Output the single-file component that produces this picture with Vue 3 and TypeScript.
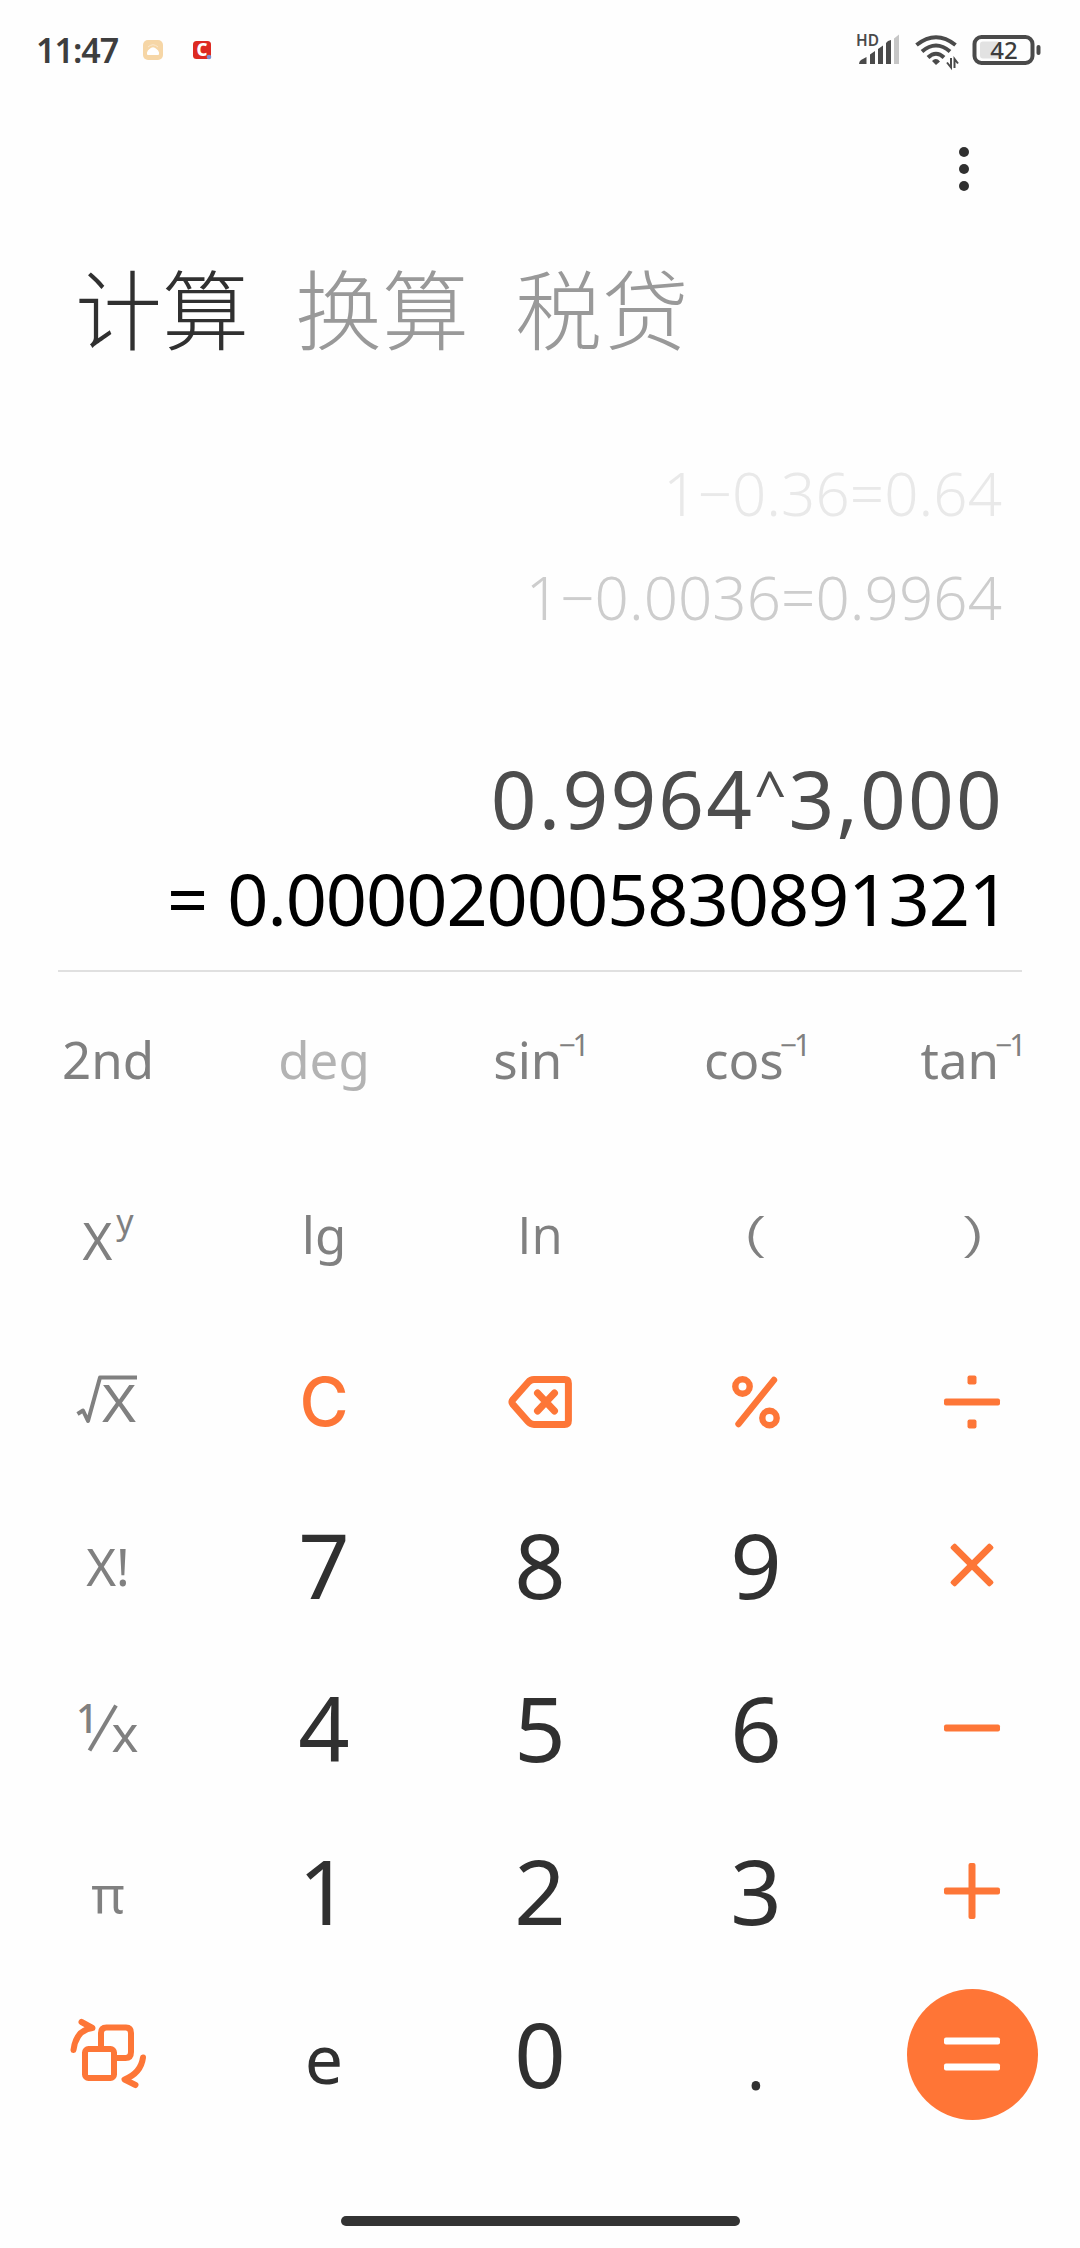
<script setup lang="ts">
  import { ref } from 'vue'

  type Key = {
    id: string
    kind: 'fn' | 'num' | 'icon' | 'equal'
    label?: string
    sup?: string
  }

  const tabs = ['计算', '换算', '税贷']
  const activeTab = ref(0)

  const history = ['1−0.36=0.64', '1−0.0036=0.9964']
  const expression = { base: '0.9964', exponent: '3,000' }
  const result = '0.000020005830891321'

  const keys: Key[] = [
    { id: 'second', kind: 'fn', label: '2nd' },
    { id: 'deg', kind: 'fn', label: 'deg' },
    { id: 'asin', kind: 'fn', label: 'sin', sup: '−1' },
    { id: 'acos', kind: 'fn', label: 'cos', sup: '−1' },
    { id: 'atan', kind: 'fn', label: 'tan', sup: '−1' },
    { id: 'power', kind: 'fn', label: 'X', sup: 'y' },
    { id: 'lg', kind: 'fn', label: 'lg' },
    { id: 'ln', kind: 'fn', label: 'In' },
    { id: 'open', kind: 'fn', label: '(' },
    { id: 'close', kind: 'fn', label: ')' },
    { id: 'sqrt', kind: 'icon' },
    { id: 'clear', kind: 'fn', label: 'C' },
    { id: 'back', kind: 'icon' },
    { id: 'percent', kind: 'icon' },
    { id: 'divide', kind: 'icon' },
    { id: 'factorial', kind: 'fn', label: 'X!' },
    { id: 'n7', kind: 'num', label: '7' },
    { id: 'n8', kind: 'num', label: '8' },
    { id: 'n9', kind: 'num', label: '9' },
    { id: 'times', kind: 'icon' },
    { id: 'inverse', kind: 'icon' },
    { id: 'n4', kind: 'num', label: '4' },
    { id: 'n5', kind: 'num', label: '5' },
    { id: 'n6', kind: 'num', label: '6' },
    { id: 'minus', kind: 'icon' },
    { id: 'pi', kind: 'fn', label: 'π' },
    { id: 'n1', kind: 'num', label: '1' },
    { id: 'n2', kind: 'num', label: '2' },
    { id: 'n3', kind: 'num', label: '3' },
    { id: 'plus', kind: 'icon' },
    { id: 'swap', kind: 'icon' },
    { id: 'euler', kind: 'num', label: 'e' },
    { id: 'n0', kind: 'num', label: '0' },
    { id: 'dot', kind: 'num', label: '.' },
    { id: 'equal', kind: 'equal' },
  ]
</script>

<template>
  <div class="screen">
    <header class="status">
      <span class="clock">11:47</span>
      <svg class="app-icon" width="20" height="20" viewBox="0 0 20 20">
        <rect width="20" height="20" rx="5" fill="#f6d6a6" />
        <path d="M5 15Q3.500 15 4 12.500Q4.500 10 6.500 9Q10 5.500 13.500 9Q15.500 10 16 12.500Q16.500 15 15 15Z" fill="#fff" />
        <path d="M5 7Q10 2.500 15 7" fill="none" stroke="#fbe9cf" />
      </svg>
      <svg class="app-icon red" width="19" height="19" viewBox="0 0 19 19">
        <rect width="18" height="18" rx="3.500" fill="#dd2a22" />
        <text x="9" y="15" text-anchor="middle" class="app-letter">C</text>
        <circle cx="16" cy="16" r="2.300" fill="#7d8fd0" />
      </svg>

      <svg class="signals" width="190" height="40" viewBox="0 0 190 40">
        <text x="6" y="15.500" class="hd" textLength="23" lengthAdjust="spacingAndGlyphs">HD</text>
        <g fill="#4a4a4a">
          <path d="M9 34Q9 31.500 11 30L16.500 27V34Z" />
          <path d="M20 34V24.500L25 21V34Z" />
          <path d="M28 34V19L33 15.500V34Z" />
          <path d="M36 34V13L38 11L41 10V34Z" />
        </g>
        <path d="M44 34V8.500L49 4.500V34Z" fill="#c6c6c6" />
        <g fill="none" stroke="#4a4a4a" stroke-width="4">
          <path d="M66.500 15Q86 -0.500 105.500 15" />
          <path d="M72 21.500Q86 9.500 100 21.500" />
          <path d="M78 27.500Q86 20 94 27.500" />
        </g>
        <path d="M82 31Q86 27 90 31.500L86 35Z" fill="#4a4a4a" />
        <path d="M101 28V37.500L97 32.500M104.500 38V29L108 33.500" fill="none" stroke="#4a4a4a" stroke-width="2" />
        <rect x="124.500" y="7" width="58" height="26" rx="7" fill="none" stroke="#4a4a4a" stroke-width="4" />
        <rect x="130" y="11.500" width="20" height="17" rx="3" fill="#e2e2e2" />
        <rect x="186.500" y="15" width="4" height="10" rx="2" fill="#4a4a4a" />
        <text x="154" y="29" text-anchor="middle" class="battery">42</text>
      </svg>
    </header>

    <div class="toolbar">
      <svg width="10" height="44" viewBox="0 0 10 44" fill="#303030">
        <circle cx="5" cy="5" r="5" />
        <circle cx="5" cy="22" r="5" />
        <circle cx="5" cy="39" r="5" />
      </svg>
    </div>

    <nav class="tabs">
      <span
        v-for="(tab, index) in tabs"
        :key="tab"
        :class="['tab', { active: activeTab === index }]"
        @click="activeTab = index"
      >
        {{ tab }}
      </span>
    </nav>

    <section class="display">
      <p v-for="(line, index) in history" :key="line" :class="['history', { recent: index === 1 }]">{{ line }}</p>
      <p class="expression">{{ expression.base }}<span class="caret">^</span>{{ expression.exponent }}</p>
      <p class="result">
        <span class="eq">=</span><span>{{ result }}</span>
      </p>
    </section>

    <main class="keypad">
      <div v-for="key in keys" :key="key.id" :class="['key', key.kind, key.id]">
        <template v-if="key.label">
          <span class="label">{{ key.label }}</span>
          <span v-if="key.sup" class="sup">{{ key.sup }}</span>
        </template>

        <svg v-else-if="key.id === 'sqrt'" width="64" height="54" viewBox="0 0 64 54">
          <path d="M1.500 39L7 35.500L12 46L24 2.500H61" fill="none" stroke="#808080" stroke-width="4" stroke-linejoin="round" />
          <text x="26" y="47" class="glyph" textLength="34" lengthAdjust="spacingAndGlyphs">X</text>
        </svg>

        <svg v-else-if="key.id === 'back'" width="64" height="54" viewBox="0 0 64 54" class="line">
          <path d="M26 4.600H56.500Q60.400 4.600 60.400 8.500V45.500Q60.400 49.400 56.500 49.400H26Q22.500 49.400 20 46.500L5 29.500Q3 27 5 24.500L20 7.500Q22.500 4.600 26 4.600Z" />
          <path d="M29.500 18L46.500 36M46.500 18L29.500 36" />
        </svg>

        <svg v-else-if="key.id === 'percent'" width="48" height="54" viewBox="0 0 48 54" class="line medium">
          <circle cx="10.500" cy="11.500" r="7.200" />
          <circle cx="37.500" cy="43" r="7.200" />
          <path d="M6.500 49L42 5" />
        </svg>

        <svg v-else-if="key.id === 'divide'" width="56" height="54" viewBox="0 0 56 54" fill="#fd7637">
          <rect x="23.500" y="0.500" width="9" height="9" rx="2" />
          <rect y="23.500" width="56" height="7" rx="2" />
          <rect x="23.500" y="44.500" width="9" height="9" rx="2" />
        </svg>

        <svg v-else-if="key.id === 'times'" width="56" height="56" viewBox="0 0 56 56" fill="#fd7637">
          <g transform="rotate(45 28 28)">
            <rect x="0" y="24.500" width="56" height="7" rx="2" />
            <rect x="24.500" y="0" width="7" height="56" rx="2" />
          </g>
        </svg>

        <svg v-else-if="key.id === 'minus'" width="56" height="56" viewBox="0 0 56 56" fill="#fd7637">
          <rect y="24.500" width="56" height="7" rx="2" />
        </svg>

        <svg v-else-if="key.id === 'plus'" width="56" height="56" viewBox="0 0 56 56" fill="#fd7637">
          <rect y="24.500" width="56" height="7" rx="2" />
          <rect x="24.500" width="7" height="56" rx="2" />
        </svg>

        <svg v-else-if="key.id === 'inverse'" width="64" height="54" viewBox="0 0 64 54">
          <text x="0" y="32" class="glyph one">1</text>
          <path d="M13.500 49.500L40 4.500" stroke="#808080" stroke-width="4" />
          <text x="49" y="51" text-anchor="middle" class="glyph">x</text>
        </svg>

        <svg v-else-if="key.id === 'swap'" width="76" height="70" viewBox="0 0 76 70" class="line thin">
          <path d="M31 27V14Q31 8.500 36.500 8.500H56Q61 8.500 61 14V33Q61 39 55.500 39H47" />
          <rect x="15" y="30" width="29" height="29" rx="3.500" />
          <path d="M3.500 31Q6 11 22.500 9L11.500 3" />
          <path d="M73 38.500Q71 54 54.500 60.500L65.500 66" />
        </svg>

        <svg v-else width="56" height="34" viewBox="0 0 56 34" fill="#fff">
          <rect y="0.500" width="56" height="7" rx="2" />
          <rect y="26.500" width="56" height="7" rx="2" />
        </svg>
      </div>
    </main>

    <div class="home-bar"></div>
  </div>
</template>

<style>
  body {
    margin: 0;
    background: #fefefe;
  }
</style>

<style scoped>
  .screen {
    display: flex;
    flex-direction: column;
    width: 1080px;
    height: 2248px;
    overflow: hidden;
    background: #fefefe;
    color: #303030;
    font-family: 'Noto Sans', 'Noto Sans CJK SC', sans-serif;
  }

  .status {
    display: flex;
    align-items: center;
    height: 100px;
    padding: 0 40px 0 36px;
    box-sizing: border-box;
  }

  .clock {
    width: 107px;
    color: #3e3e3e;
    font-size: 34px;
    font-weight: 600;
    letter-spacing: -1px;
    line-height: 100px;
  }

  .app-icon {
    flex: none;
    overflow: visible;
  }

  .app-icon.red {
    margin-left: 30px;
  }

  .app-letter {
    fill: #fff;
    font-size: 17px;
    font-weight: 800;
  }

  .signals {
    margin-left: auto;
    overflow: visible;
  }

  .hd {
    fill: #4a4a4a;
    font-size: 16px;
    font-weight: 600;
  }

  .battery {
    fill: #3c3c3c;
    font-size: 24px;
    font-weight: 500;
  }

  .toolbar {
    display: flex;
    align-items: center;
    justify-content: flex-end;
    height: 138px;
    padding-right: 111px;
  }

  .tabs {
    display: flex;
    gap: 46px;
    height: 144px;
    padding-left: 75px;
    font-family: 'Noto Sans CJK SC', sans-serif;
  }

  .tab {
    color: #999;
    font-size: 87px;
    font-weight: 300;
    line-height: 136px;
  }

  .tab.active {
    color: #303030;
  }

  .display {
    display: flex;
    flex-direction: column;
    height: 590px;
    margin: 0 58px;
    padding: 59px 18px 0 0;
    box-sizing: border-box;
    border-bottom: 2px solid #e0e0e0;
    text-align: right;
    white-space: nowrap;
  }

  .display p {
    margin: 0;
  }

  .history {
    height: 104px;
    padding-right: 2px;
    color: #e9e9e9;
    font-size: 60px;
    font-weight: 300;
    letter-spacing: 0.1px;
    line-height: 104px;
  }

  .history.recent {
    color: #cdcdcd;
  }

  .display .expression {
    height: 100px;
    margin: 99px 0 0;
    color: #4d4d4d;
    font-size: 80px;
    letter-spacing: 2.2px;
    line-height: 100px;
  }

  .caret {
    font-size: 56px;
    line-height: 1;
    vertical-align: 17px;
  }

  .display .result {
    margin-right: -5px;
    color: #000;
    font-size: 72px;
    letter-spacing: -1px;
    line-height: 100px;
  }

  .result .eq {
    margin-right: 20px;
  }

  .keypad {
    display: grid;
    grid-template-columns: repeat(5, 216px);
    grid-template-rows: 176px 172px repeat(5, 163.2px);
  }

  .key {
    display: flex;
    align-items: center;
    justify-content: center;
    color: #808080;
    font-size: 51px;
    line-height: 1;
  }

  .key svg {
    flex: none;
    overflow: visible;
  }

  .second,
  .deg,
  .asin,
  .acos,
  .atan {
    padding-bottom: 2px;
  }

  .sup {
    margin: 0 0 28px -4px;
    font-size: 30px;
    letter-spacing: -3px;
  }

  .power .label {
    padding-top: 12px;
  }

  .power .sup {
    margin: 0 0 26px 4px;
    font-size: 34px;
    letter-spacing: 0;
  }

  .deg {
    color: #b3b3b3;
  }

  /* the serifless capital I */
  .ln {
    font-family: 'Open Sans', sans-serif;
  }

  .open .label,
  .close .label {
    margin-bottom: 6px;
    font-weight: 300;
    transform: scale(1.5, 0.93);
  }

  .factorial .label,
  .pi .label {
    padding-top: 4px;
  }

  .num {
    padding-bottom: 2px;
    color: #303030;
    font-size: 90px;
  }

  .euler {
    padding-top: 9px;
    font-size: 68px;
  }

  .dot {
    padding-top: 20px;
    font-size: 70px;
  }

  .clear {
    color: #fd7637;
    font-family: Inter, sans-serif;
    font-size: 67px;
    font-weight: 500;
  }

  .glyph {
    fill: #808080;
    font-size: 51px;
  }

  .glyph.one {
    font-size: 39px;
    font-weight: 500;
  }

  .line {
    fill: none;
    stroke: #fd7637;
    stroke-width: 7px;
    stroke-linecap: round;
    stroke-linejoin: round;
  }

  .line.medium {
    stroke-width: 6.4px;
  }

  .line.thin {
    stroke-width: 6px;
  }

  .equal {
    display: grid;
    place-content: center;
    place-items: center;
  }

  .equal::before {
    content: '';
    grid-area: 1 / 1;
    width: 131px;
    height: 131px;
    border-radius: 50%;
    background: #ff7536;
  }

  .equal svg {
    grid-area: 1 / 1;
  }

  .home-bar {
    width: 399px;
    height: 10px;
    margin: 80px auto 0;
    border-radius: 5px;
    background: #333;
  }
</style>
